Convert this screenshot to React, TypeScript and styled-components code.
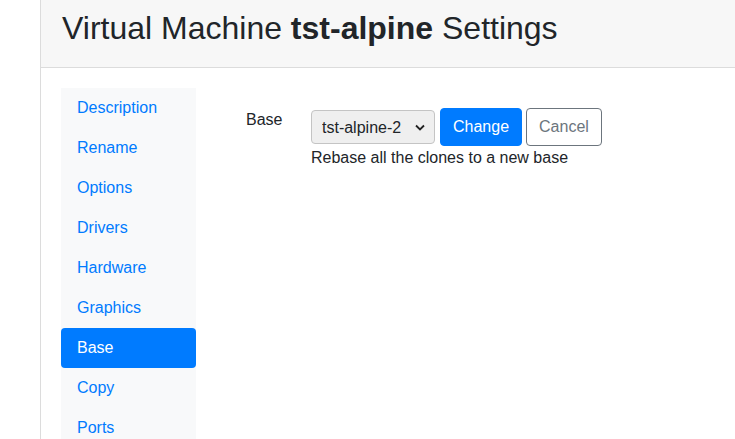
import styled, { createGlobalStyle } from "styled-components"
import { useState } from "react"

const GlobalStyle = createGlobalStyle`
    html, body {
        margin: 0;
        height: 100%;
        overflow: hidden;
    }
    body {
        font-family: "Liberation Sans", Arial, sans-serif;
        font-size: 16px;
        line-height: 24px;
        color: #212529;
        background: #fff;
    }
`

const Page = styled.div`
    display: flex;
    height: 100vh;
    overflow: hidden;
`

const Gutter = styled.div`
    width: 40px;
    flex-shrink: 0;
`

const Main = styled.div`
    flex: 1;
    display: flex;
    flex-direction: column;
    border-left: 1px solid #dcdcdc;
`

const Header = styled.header`
    flex-shrink: 0;
    height: 68px;
    box-sizing: border-box;
    padding: 9px 0 0 21px;
    background-color: #f7f7f7;
    border-bottom: 1px solid #dcdcdc;
`

const Title = styled.h2`
    margin: 0;
    font-size: 32px;
    font-weight: 400;
    line-height: 38px;
    b {
        font-weight: 700;
    }
`

const Body = styled.div`
    flex-shrink: 0;
    display: flex;
    padding: 20px 0 0 20px;
`

const Sidebar = styled.nav`
    width: 135px;
    flex-shrink: 0;
    display: flex;
    flex-direction: column;
    background-color: #f8f9fa;
`

const NavLink = styled.a<{ $active?: boolean }>`
    display: block;
    padding: 8px 16px;
    border-radius: 4px;
    text-decoration: none;
    cursor: pointer;
    color: ${props => props.$active ? "#fff" : "#007bff"};
    background-color: ${props => props.$active ? "#007bff" : "transparent"};
`

const Content = styled.div`
    margin-left: 50px;
    padding-top: 20px;
`

const FormRow = styled.div`
    display: flex;
`

const Label = styled.label`
    width: 65px;
`

const Field = styled.div`
    display: flex;
    flex-direction: column;
`

const Controls = styled.div`
    display: flex;
    align-items: center;
    gap: 4px;
`

const SelectBox = styled.div`
    position: relative;
    margin-right: 1px;
    svg {
        position: absolute;
        right: 10px;
        top: 14px;
        pointer-events: none;
    }
`

const Select = styled.select`
    appearance: none;
    width: 124px;
    height: 34px;
    padding: 0 28px 0 10px;
    font-family: inherit;
    font-size: 16px;
    color: #212529;
    background-color: #efefef;
    border: 1px solid #c4c4c4;
    border-radius: 4px;
`

const Button = styled.button<{ $variant: "primary" | "outline" }>`
    padding: 6px 12px;
    font-family: inherit;
    font-size: 16px;
    line-height: 24px;
    border-radius: 4px;
    cursor: pointer;
    border: 1px solid ${props => props.$variant === "primary" ? "#007bff" : "#6c757d"};
    color: ${props => props.$variant === "primary" ? "#fff" : "#6c757d"};
    background-color: ${props => props.$variant === "primary" ? "#007bff" : "#fff"};
`

const Help = styled.div`
    margin: 0;
`

const sections = ["Description", "Rename", "Options", "Drivers", "Hardware", "Graphics", "Base", "Copy", "Ports"]

const App = () => {
    const [active, setActive] = useState("Base")
    const [base, setBase] = useState("tst-alpine-2")
    return (
        <>
            <GlobalStyle />
            <Page>
                <Gutter />
                <Main>
                    <Header>
                        <Title>Virtual Machine <b>tst-alpine</b> Settings</Title>
                    </Header>
                    <Body>
                        <Sidebar>
                            {sections.map(name => (
                                <NavLink key={name} $active={name === active} onClick={() => setActive(name)}>{name}</NavLink>
                            ))}
                        </Sidebar>
                        <Content>
                            <FormRow>
                                <Label htmlFor="base">Base</Label>
                                <Field>
                                    <Controls>
                                        <SelectBox>
                                            <Select id="base" value={base} onChange={event => setBase(event.target.value)}>
                                                <option>tst-alpine-2</option>
                                                <option>tst-alpine-3</option>
                                            </Select>
                                            <svg width="10" height="7" viewBox="0 0 10 7">
                                                <path d="M1 1.5 L5 5.5 L9 1.5" fill="none" stroke="#222" strokeWidth="1.8" />
                                            </svg>
                                        </SelectBox>
                                        <Button type="button" $variant="primary">Change</Button>
                                        <Button type="button" $variant="outline">Cancel</Button>
                                    </Controls>
                                    <Help>Rebase all the clones to a new base</Help>
                                </Field>
                            </FormRow>
                        </Content>
                    </Body>
                </Main>
            </Page>
        </>
    )
}

export default App
